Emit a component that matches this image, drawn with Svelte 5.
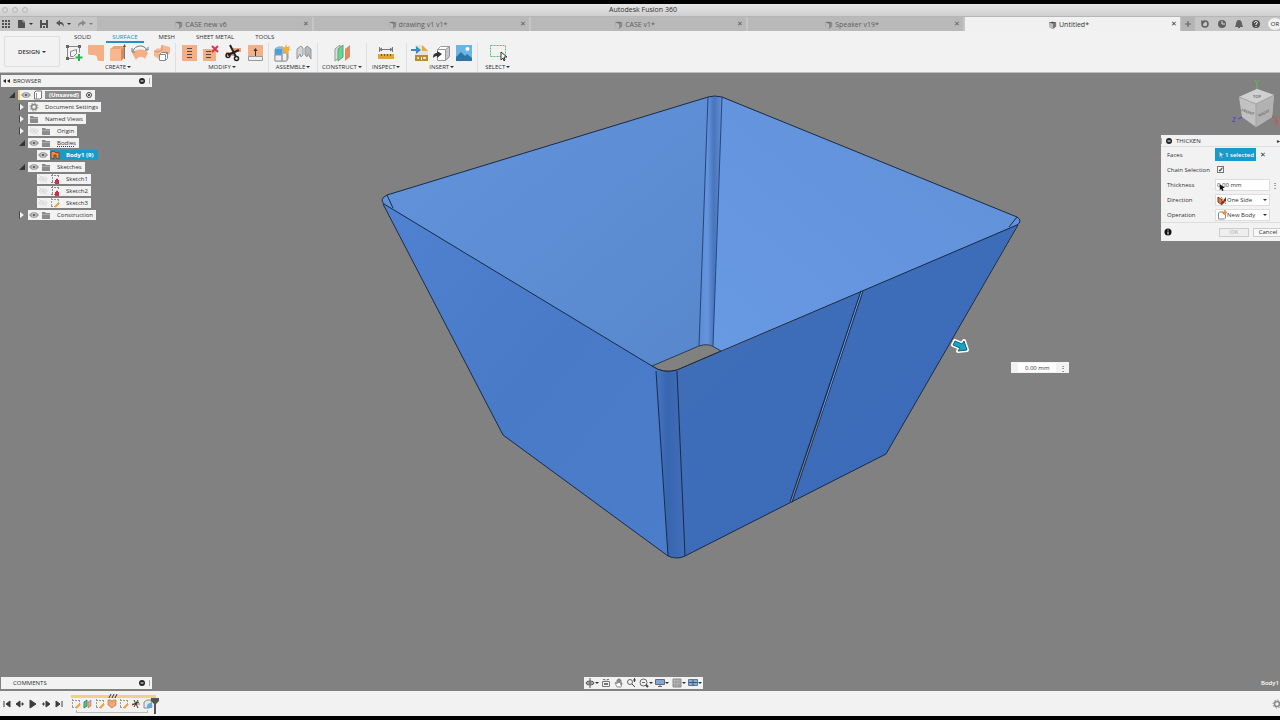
<script>
  const svg = (body, size = 18) =>
    `<svg viewBox="0 0 ${size} ${size}" width="${size}" height="${size}" fill="none" aria-hidden="true">${body}</svg>`;

  const stitches = (x) =>
    [4, 7, 10, 13].map((y) => `<path d="M${x} ${y}.500h5" stroke="#5a4638"/>`).join('');

  const tool = {
    sketch: svg('<path d="M2.500 2.500h12v6M2.500 2.500v12h7" stroke="#888"/><path d="M1 1h3v3H1zM13 1h3v3h-3zM1 13h3v3H1z" fill="#666"/><path d="M5.500 12.500v-5l6-2v4l-3 3z" stroke="#888"/><path d="M14 10v7M10.500 13.500h7" stroke="#28b34c" stroke-width="2"/>'),
    patch: svg('<path d="M1 1h16v16h-5c-1 0-2-1-2-3 0-2-1-3-4-3H3c-1 0-2-1-2-2z" fill="#f5af86"/>'),
    extrude: svg('<path d="M12 5l4-3v11l-4 4z" fill="#d98a5d"/><path d="M1 5h11v12H1z" fill="#f8b88f"/><path d="M1 5l4-3h11l-4 3z" fill="#e8a27a"/><path d="M15.500 1v14" stroke="#777"/><path d="M14 3l1.500-3L17 3z" fill="#555"/>'),
    revolve: svg('<path d="M1 9c3-4 13-5 16 0l-3 6c-3-3-6-3-9 1z" fill="#f5af82"/><path d="M2 7c2-6 11-7 14-1" stroke="#777"/><path d="M14 6h3V3M1 4v4h3" stroke="#777"/>'),
    sweep: svg('<path d="M1 7l4-3 2 1 2-4 8 2v6l-4 3H6v3l-5-3z" fill="#f8b88f"/><path d="M1 7l5 1 3-2V1" stroke="#dd9468"/><path d="M6 10l2-2h7v7l-2 2H6z" fill="#fff"/><path d="M6.500 10.500h6v6h-6zM12.500 10.500l2-2v6l-2 2M6.500 10.500l2-2h6" stroke="#888"/>'),
    stitch: svg(`<path d="M2 1h15v16H2z" fill="#f5af86"/>${stitches(7)}`),
    unstitch: svg(`<path d="M1 5h13v12H1z" fill="#f5af86"/>${[7, 10, 13].map((y) => `<path d="M4 ${y}.500h5" stroke="#5a4638"/>`).join('')}<path d="M10 2l6 6M16 2l-6 6" stroke="#e2324a" stroke-width="2"/>`),
    trim: svg('<path d="M9 4h8v4H9zM2 8h8v4H2z" fill="#e8a27a"/><path d="M6 1l6 12M15 6L4 11" stroke="#222" stroke-width="2"/><circle cx="12.500" cy="14.500" r="2" stroke="#222" stroke-width="1.500"/><circle cx="4" cy="11.500" r="2" stroke="#222" stroke-width="1.500"/>'),
    extend: svg('<path d="M2 1h15v12H2z" fill="#f5af86"/><path d="M2.500 12.500h14v4h-14z" fill="#eee" stroke="#999"/><path d="M9.500 12V6" stroke="#333"/><path d="M7.500 7l2-3 2 3z" fill="#333"/>'),
    component: svg('<path d="M2 5l3-2h5v4h5v8l-2 2H2z" fill="#bbb" stroke="#999"/><path d="M2 5h7v6H2z" fill="#4c9fdc"/><path d="M2 5l2-2h6l-1 2z" fill="#81bdea"/><path d="M9 9h5v8H9zM2 11h7v6H2z" fill="#eee" stroke="#999"/><path d="M13 0l1 3 3-1-1 3 2 1-3 1v3l-2-2-2 1v-3L9 4l3-1z" fill="#f2b134"/>'),
    joint: svg('<path d="M2 5l4-3 2 2v7l-2 2-1-3-3 5z" fill="#d3d6d8" stroke="#999"/><path d="M16 5l-4-3-2 2v7l2 2 1-3 3 5z" fill="#b4b9bc" stroke="#999"/>'),
    plane: svg('<path d="M2 5l5-4v12l-5 4z" fill="#dcdedc" stroke="#999"/><path d="M5 5l5-4v12l-5 4z" fill="#66d492" stroke="#58a678"/><path d="M12 5l5-4v12l-5 4z" fill="#df8b66"/>'),
    measure: svg('<path d="M2 5.500h14M2.500 3v5M15.500 3v5" stroke="#777"/><path d="M2 5.500l3-2v4zM16 5.500l-3-2v4z" fill="#777"/><path d="M1 10h16v5H1z" fill="#e2a433"/><path d="M4.500 10v2M7.500 10v2M10.500 10v2M13.500 10v2" stroke="#76551f"/>'),
    insertFile: svg('<path d="M4 1h8l5 5v11H4z" fill="#e8e5d8"/><path d="M11 1l6 6h-6z" fill="#e6ac37"/><path d="M4 11h13v6H4z" fill="#b78b32"/><path d="M6.500 13.500h1v1h-1zM10.500 13v3M12.500 13.500h2v1h-2z" stroke="#fff3cd"/><path d="M0 5h5V2l5 4-5 4V7H0z" fill="#2f8fce"/>'),
    insertMesh: svg('<path d="M4 5l3-3h10v11l-4 4H4z" fill="#fff"/><path d="M13 5l4-3v11l-4 4z" fill="#c8c8c8"/><path d="M4.500 5.500h8v11h-8zM4.500 5.500l3-3h9v10l-4 4M12.500 5.500l4-3" stroke="#999"/><path d="M0 14c0-4 2-5 4-5V7l5 3-5 4v-2c-2 0-3 1-4 2z" fill="#333"/>'),
    image: svg('<path d="M1 1h16v16H1z" fill="#6bb4e4"/><path d="M1 13l5-5 4 4 2-2 5 4v3H1z" fill="#2d74a8"/><circle cx="12.500" cy="5" r="2" fill="#fff"/>'),
    select: svg('<path d="M1.500 1.500h15v11h-15z" stroke="#4cc07a" stroke-dasharray="2 1"/><path d="M12 8v8l2-2 1 3 1-1-1-3h3z" fill="#fff" stroke="#333"/>')
  };

  const groups = [
    { label: 'CREATE', icons: ['sketch', 'patch', 'extrude', 'revolve', 'sweep'] },
    { label: 'MODIFY', icons: ['stitch', 'unstitch', 'trim', 'extend'] },
    { label: 'ASSEMBLE', icons: ['component', 'joint'] },
    { label: 'CONSTRUCT', icons: ['plane'] },
    { label: 'INSPECT', icons: ['measure'] },
    { label: 'INSERT', icons: ['insertFile', 'insertMesh', 'image'] },
    { label: 'SELECT', icons: ['select'] }
  ];

  const documents = ['CASE new v6', 'drawing v1 v1*', 'CASE v1*', 'Speaker v19*', 'Untitled*'];
  const workspaces = ['SOLID', 'SURFACE', 'MESH', 'SHEET METAL', 'TOOLS'];

  const s = (body) => svg(body, 10);
  const eyeShape = '<path d="M0 5c3-4 7-4 10 0-3 4-7 4-10 0z" fill="#999"/><circle cx="5" cy="5" r="2" fill="#666" stroke="#ddd"/>';
  const small = {
    cube: s('<path d="M0 2l4-1 5 1v5l-4 3-4-2z" fill="#777"/><path d="M0 2l5 1v7L1 8z" fill="#bbb"/><path d="M0 2l4-1 5 1-4 1z" fill="#555"/>'),
    eye: s(eyeShape),
    hidden: s(`<g opacity=".2">${eyeShape}<path d="M1 1l8 8" stroke="#888"/></g>`),
    folder: s('<path d="M1 2h3l1 1h4v6H1z" fill="#8c8c8c"/><path d="M1 4.500h8" stroke="#aaa"/>'),
    gear: s('<circle cx="5" cy="5" r="2.500" stroke="#888" stroke-width="1.500"/><circle cx="5" cy="5" r="4" stroke="#888" stroke-dasharray="1.500 1.600"/>'),
    part: s('<path d="M1.500 2l2-1h5v7l-2 1h-5z" fill="#fff" stroke="#777"/><path d="M3.500 3v6" stroke="#999"/>'),
    surface: s('<path d="M1 2l3-1 2 2 3-1v7l-3-1V5H4v4L1 8z" fill="#f58b3c" stroke="#8e4316"/>'),
    locked: s('<path d="M1 1.500h8M2.500 0v9M1 8.500h4M8.500 1v3" stroke="#888" stroke-dasharray="2 1"/><path d="M5 6h4v4H5z" fill="#d82b45"/><path d="M6.500 6V5h1v1" stroke="#d82b45"/>'),
    editable: s('<path d="M1 1.500h8M1.500 0v9M1 8.500h5M8.500 1v4" stroke="#999" stroke-dasharray="2 1"/><path d="M5 9l4-4" stroke="#efa23c" stroke-width="2"/>'),
    dot: s('<circle cx="5" cy="5" r="3" fill="#222"/><path d="M3.500 5h3" stroke="#fff"/>'),
    grid: s('<path d="M1 1h2v2H1zM4 1h2v2H4zM7 1h2v2H7zM1 4h2v2H1zM4 4h2v2H4zM7 4h2v2H7zM1 7h2v2H1zM4 7h2v2H4zM7 7h2v2H7z" fill="#505050"/>'),
    file: s('<path d="M1 1h5l2 2v6H1z" fill="#505050"/><path d="M6 1v2h2" stroke="#aaa"/>'),
    save: s('<path d="M1 1h8v8H1z" fill="#505050"/><path d="M3 1h4v3H3zM3 6h4v3H3z" fill="#ccc"/><path d="M4 7h2v2H4z" fill="#505050"/>'),
    undo: s('<path d="M1 4l4-3v2c3 0 4 2 4 5-1-2-2-3-4-3v2z" fill="#555"/>'),
    redo: s('<path d="M9 4L5 1v2C2 3 1 5 1 8c1-2 2-3 4-3v2z" fill="#888"/>'),
    plus: s('<path d="M5 2v6M2 5h6" stroke="#666" stroke-width="1.200"/>'),
    sync: s('<circle cx="5" cy="5" r="3" stroke="#606060" stroke-width="1.500"/><path d="M1 1l4 2-3 3z" fill="#606060"/>'),
    clock: s('<circle cx="5" cy="5" r="4" fill="#606060"/><path d="M5 2v3h3" stroke="#ddd"/>'),
    bell: s('<path d="M5 1c2 0 3 2 3 4l1 3H1l1-3c0-2 1-4 3-4zM4 8h2v1H4z" fill="#606060"/>'),
    help: s('<circle cx="5" cy="5" r="4" fill="#505050"/><path d="M3.500 4c0-2 3-2 3 0L5 5v1M5 7v1" stroke="#fff"/>'),
    info: s('<circle cx="5" cy="5" r="3.500" fill="#111"/><path d="M5 2.500v1M5 4.500v3" stroke="#fff"/>'),
    rewind: s('<path d="M5 3v4L2 5zM9 3v4L6 5z" fill="#222"/>'),
    pointer: s('<path d="M3 1v7l2-2 1 3 1-1-1-3h3z" fill="#bfe8f8" stroke="#6b7a80" stroke-width=".5"/>'),
    oneSide: s('<path d="M1 2l4 3v5L1 7z" fill="#e98043" stroke="#743b20"/><path d="M4 8l5-6v4L6 9z" fill="#5c3a2a"/><path d="M4 2l5 7" stroke="#e0683a"/>'),
    newBody: s('<path d="M1.500 3l1-1h4v2h2v4l-1 1h-6z" fill="#fff" stroke="#888"/><path d="M8 0v5M5 2.500h5" stroke="#f08a34" stroke-width="1.500"/>'),
    orbit: s('<path d="M5 0v10M1 5h8" stroke="#555"/><ellipse cx="5" cy="5" rx="4" ry="2" stroke="#555"/>'),
    look: s('<path d="M1.500 3.500h7v5h-7zM2 1.500h2v1M6 2.500v-1h2" stroke="#777"/><path d="M3 6h4" stroke="#777" stroke-width="2"/>'),
    hand: s('<path d="M3 9L1 5l1-1 1 2V2h1v3-4h1v4-4h1v4-3h1v5-2h1L7 9z" fill="#fff" stroke="#777" stroke-width=".8"/>'),
    zoom: s('<circle cx="4" cy="4" r="2.500" stroke="#666"/><path d="M6 6l3 3M7 2h3M8.500 0v4" stroke="#444"/>'),
    fit: s('<circle cx="4.500" cy="4.500" r="3.500" stroke="#666"/><path d="M7 7l2 2" stroke="#444" stroke-width="2"/><path d="M3 4.500h3" stroke="#666"/>'),
    display: s('<path d="M.5 1.500h9v5h-9z" fill="#7fa9d2" stroke="#667"/><path d="M3 8.500h4M5 7v2" stroke="#667"/>'),
    layout: s('<path d="M1 1h8v8H1z" fill="#bbb" stroke="#888"/><path d="M4 1v8M7 1v8M1 4h8M1 7h8" stroke="#888" stroke-width=".6"/>'),
    views: s('<path d="M.5 1.500h9v6h-9z" fill="#83aedb" stroke="#678"/><path d="M5 2v6M1 4.500h8" stroke="#456"/>'),
    planeSmall: s('<path d="M1 3l3-2v6L1 9z" fill="#5ec183" stroke="#3c8e5d"/><path d="M5 3l3-2v6L5 9z" fill="#f4a46e" stroke="#777" stroke-width=".5"/>'),
    loft: s('<path d="M1 1h3l1 2 1-2h3v5L5 9 1 6z" fill="#f0a678" stroke="#b9784f" stroke-width=".7"/>'),
    cut: s('<path d="M1 4h8v2H1z" fill="#f0a678"/><path d="M3 1l4 8M7 1L3 8M1 6l7-3" stroke="#333"/>'),
    body: s('<path d="M1 3l3-2h4l1 7-3 1H1z" fill="#d9e8f5" stroke="#777" stroke-width=".8"/><path d="M4 9c0-4 1-5 5-5v5z" fill="#68a8df"/>')
  };

  const tree = [
    { level: 1, toggle: 'closed', icons: ['gear'], text: 'Document Settings' },
    { level: 1, toggle: 'closed', icons: ['folder'], text: 'Named Views' },
    { level: 1, toggle: 'closed', icons: ['hidden', 'folder'], text: 'Origin' },
    { level: 1, toggle: 'open', icons: ['eye', 'folder'], text: 'Bodies', marked: true },
    { level: 2, icons: ['eye', 'surface'], text: 'Body1 (9)', selected: true },
    { level: 1, toggle: 'open', icons: ['eye', 'folder'], text: 'Sketches' },
    { level: 2, icons: ['hidden', 'locked'], text: 'Sketch1' },
    { level: 2, icons: ['hidden', 'locked'], text: 'Sketch2' },
    { level: 2, icons: ['hidden', 'editable'], text: 'Sketch3' },
    { level: 1, toggle: 'closed', icons: ['eye', 'folder'], text: 'Construction' }
  ];

  const nav = [
    { icon: 'orbit', name: 'Orbit', menu: true },
    { icon: 'look', name: 'Look at' },
    { icon: 'hand', name: 'Pan' },
    { icon: 'zoom', name: 'Zoom' },
    { icon: 'fit', name: 'Fit', menu: true },
    { icon: 'display', name: 'Display settings', menu: true },
    { icon: 'layout', name: 'Grid and snaps', menu: true },
    { icon: 'views', name: 'Viewports', menu: true }
  ];

  const playback = [
    { name: 'Go to start', d: 'M2 2v6M8 2L4 5l4 3z' },
    { name: 'Step back', d: 'M5 2L1 5l4 3zM7 4h1v2H7z' },
    { name: 'Play', d: 'M2 1l6 4-6 4z' },
    { name: 'Step forward', d: 'M5 2l4 3-4 3zM2 4h1v2H2z' },
    { name: 'Go to end', d: 'M8 2v6M2 2l4 3-4 3z' }
  ];
  const features = ['editable', 'planeSmall', 'editable', 'loft', 'editable', 'cut', 'body'];

  let chain = $state(true);
  let thickness = $state('0.00 mm');
</script>

<div class="app">
  <header class="title"><span class="lights"><i></i><i></i><i></i></span><span>Autodesk Fusion 360</span></header>

  <div class="tabbar">
    <div class="quick">
      <button aria-label="Data panel">{@html small.grid}</button>
      <button class="menu" aria-label="File">{@html small.file}<b class="caret"></b></button>
      <button aria-label="Save">{@html small.save}</button>
      <button class="menu" aria-label="Undo">{@html small.undo}<b class="caret"></b></button>
      <button class="menu" aria-label="Redo">{@html small.redo}<b class="caret pale"></b></button>
    </div>
    <nav class="docs">
      {#each documents as doc, i}
        <div class="doc" class:current={i === 4}>
          <button class="name">{@html small.cube}{doc}</button>
          <button class="close" aria-label="Close {doc}">✕</button>
        </div>
      {/each}
    </nav>
    <div class="account">
      <button class="add" aria-label="New design">{@html small.plus}</button>
      <button aria-label="Extensions">{@html small.sync}</button>
      <button aria-label="Job status">{@html small.clock}</button>
      <button aria-label="Notifications">{@html small.bell}</button>
      <button aria-label="Help">{@html small.help}</button>
      <button class="avatar">OR</button>
    </div>
  </div>

  <div class="toolbar">
    <button class="design">DESIGN <b class="caret"></b></button>
    <div class="ribbon">
      <nav class="spaces">
        {#each workspaces as w}<button class:active={w === 'SURFACE'}>{w}</button>{/each}
      </nav>
      <div class="groups">
        {#each groups as g}
          <div class="group">
            <div class="icons">
              {#each g.icons as name}<button aria-label={name}>{@html tool[name]}</button>{/each}
            </div>
            <button class="label">{g.label} <b class="caret"></b></button>
          </div>
        {/each}
      </div>
    </div>
  </div>

  <main>
    <svg class="model" viewBox="0 73 1280 618" role="img" aria-label="Tapered open box">
      <defs>
        <linearGradient id="innerL" x1="0" y1="0" x2="1" y2="1"><stop stop-color="#6394dc" /><stop offset="1" stop-color="#5887cc" /></linearGradient>
        <linearGradient id="innerR" x1="0" y1="1" x2="1" y2="0"><stop stop-color="#6899e3" /><stop offset="1" stop-color="#6090d7" /></linearGradient>
        <linearGradient id="outerL" x1="0" y1="0" x2="1" y2="1"><stop stop-color="#5082d1" /><stop offset=".5" stop-color="#487ac8" /><stop offset="1" stop-color="#4b7dca" /></linearGradient>
        <linearGradient id="outerR" x1="0" y1="0" x2="1" y2="1"><stop stop-color="#416fb7" /><stop offset="1" stop-color="#3969bb" /></linearGradient>
        <linearGradient id="post"><stop stop-color="#4777c3" /><stop offset=".4" stop-color="#3865b0" /><stop offset="1" stop-color="#416fb8" /></linearGradient>
        <linearGradient id="back"><stop stop-color="#5b8bd2" /><stop offset=".35" stop-color="#6695df" /><stop offset=".65" stop-color="#4875bb" /><stop offset="1" stop-color="#6390d5" /></linearGradient>
      </defs>
      <path d="M387 195L708 97V346L652 367L384 204Q379 199 387 195z" fill="url(#innerL)" />
      <path d="M721 97L1017 217Q1023 221 1017 225L721 351L709 345z" fill="url(#innerR)" />
      <path d="M708 97Q714 95 722 97L713 346Q706 343 699 346z" fill="url(#back)" />
      <path d="M708 97L699 346M722 97L713 346" stroke="#24467e" fill="none" />
      <path d="M652 366L699 346Q708 343 714 347L721 351L677 370Q663 374 652 366z" fill="#818180" stroke="#293b55" />
      <path d="M383 203L652 366L657 370L668 556L503 435z" fill="url(#outerL)" />
      <path d="M677 371L1018 224L886 454L683 557z" fill="url(#outerR)" />
      <path d="M656 369Q665 374 677 370L685 556Q677 560 668 556z" fill="url(#post)" />
      <path d="M862 291L791 502" stroke="#172e50" stroke-width="3" />
      <path d="M862 291L822 411" stroke="#79a0d8" stroke-width="1" />
      <path d="M822 411L791 502" stroke="#858b8d" stroke-width="1" />
      <path d="M387 195L708 97Q714 95 722 97L1017 217Q1023 221 1017 225L677 370Q663 374 652 366L384 204Q379 199 387 195zM383 204L503 435L668 556Q677 560 685 556L886 454L1018 225M656 371L668 556M677 371L685 556M387 195L393 208M1017 217L1009 227" fill="none" stroke="#182b48" stroke-width="1" />
      <path class="halo" d="M955 341l7 3 2-3 3 9-9 1 2-3-7-3z" />
      <path class="arrow" d="M955 341l7 3 2-3 3 9-9 1 2-3-7-3z" />
    </svg>

    <aside class="browser">
      <header class="bar"><button class="collapse" aria-label="Collapse browser">{@html small.rewind}</button><h2>BROWSER</h2><button class="options" aria-label="Browser options">{@html small.dot}</button><span class="grip"></span></header>
      <ul>
        <li class="root">
          <i class="toggle open"></i>
          <button class="row rootrow">{@html small.eye}{@html small.part}<span class="tag">(Unsaved)</span><span class="radio"></span></button>
        </li>
        {#each tree as n}
          <li class:deep={n.level === 2}>
            {#if n.toggle}<i class="toggle {n.toggle}"></i>{/if}
            <button class="row" class:selected={n.selected} class:marked={n.marked}>
              {#each n.icons as name}{@html small[name]}{/each}
              <span>{n.text}</span>
            </button>
          </li>
        {/each}
      </ul>
    </aside>

    <aside class="right">
      <svg class="viewcube" viewBox="0 0 50 58" width="50" height="58" role="img" aria-label="View cube">
        <path d="M27 28V8" stroke="#58c758" /><path d="M8 42l7-3" stroke="#4b49c4" /><path d="M42 39l5 4" stroke="#d44" />
        <path d="M9 20L27 12L44 18L42 40L26 50L12 40z" fill="#c2c2c2" />
        <path d="M9 20L27 12L44 18L26 27z" fill="#d0d0d0" /><path d="M26 27L44 18L42 40L26 50z" fill="#b2b2b2" />
        <path d="M9 20L26 27L44 18M26 27V50" stroke="#a2a2a2" fill="none" />
        <text x="25" y="8" fill="#52cb52">Y</text><text x="2" y="45" fill="#4340c8">Z</text><text x="45" y="48" fill="#e0403c">X</text>
        <g class="face"><text x="23" y="21">TOP</text><text x="11" y="34" transform="rotate(20 11 34)">FRONT</text><text x="29" y="40" transform="rotate(-25 29 40)">RIGHT</text></g>
      </svg>
      <form class="thicken" onsubmit={(e) => e.preventDefault()}>
        <header><span class="grip"></span>{@html small.dot}<h2>THICKEN</h2><span class="more">▸</span></header>
        <div class="field"><span>Faces</span><button type="button" class="picked">{@html small.pointer}1 selected</button><button type="button" class="clear" aria-label="Clear faces">✕</button></div>
        <div class="field"><label for="chain">Chain Selection</label><input id="chain" type="checkbox" bind:checked={chain} /></div>
        <div class="field"><label for="thick">Thickness</label><div class="control"><input id="thick" bind:value={thickness} />
          <svg class="mouse" width="6" height="9" viewBox="0 0 8 11"><path d="M1 1v8l2-2 1 3 2-1-1-3h3z" fill="#111" /></svg></div><span class="dots">⋮</span></div>
        <div class="field"><label for="direction">Direction</label><div class="control">{@html small.oneSide}<select id="direction"><option>One Side</option><option>Two Side</option></select><b class="caret"></b></div></div>
        <div class="field"><label for="operation">Operation</label><div class="control">{@html small.newBody}<select id="operation"><option>New Body</option><option>Join</option></select><b class="caret"></b></div></div>
        <footer>{@html small.info}<span class="push"></span><button disabled>OK</button><button type="button">Cancel</button></footer>
      </form>
    </aside>

    <div class="float"><input aria-label="Thickness value" bind:value={thickness} /><span>⋮</span></div>

    <div class="bottom">
      <div class="bar comments"><h2>COMMENTS</h2><button class="options" aria-label="Comment options">{@html small.dot}</button><span class="grip"></span></div>
      <div class="nav">
        {#each nav as n}<button aria-label={n.name}>{@html small[n.icon]}{#if n.menu}<b class="caret"></b>{/if}</button>{/each}
      </div>
      <span class="status">Body1</span>
    </div>
  </main>

  <footer class="timeline">
    <div class="playback">
      {#each playback as p}
        <button aria-label={p.name}><svg width="10" height="10" viewBox="0 0 10 10"><path d={p.d} fill="#3c3c3c" stroke="#3c3c3c" stroke-width="1" /></svg></button>
      {/each}
    </div>
    <div class="history">
      {#each features as f, i}<button aria-label="Feature {i + 1}">{@html small[f]}</button>{/each}
      <svg class="marker" width="8" height="17" viewBox="0 0 8 17"><path d="M0 1h8v3L5 7v10H3V7L0 4z" fill="#555" /></svg>
      <svg class="ticks" width="10" height="4" viewBox="0 0 10 4"><path d="M1 4l2-4M4 4l2-4M7 4l2-4" stroke="#333" stroke-width="1" /></svg>
      <span class="track"></span>
    </div>
    <button class="prefs" aria-label="Timeline settings">{@html small.gear}</button>
  </footer>
</div>

<style>
  :global(body) { margin: 0; background: #000; }
  .app {
    box-sizing: border-box; min-height: 100vh; padding: 4px 0; overflow: hidden;
    display: flex; flex-direction: column; background: #000; color: #303030;
    font: 500 6px/10px "Open Sans", "Noto Sans", sans-serif;
  }
  button, input, select { font: inherit; color: inherit; border: 0; padding: 0; margin: 0; background: none; border-radius: 0; }
  button { display: flex; align-items: center; justify-content: center; white-space: nowrap; }
  h2 { font: inherit; margin: 0; }
  .app :global(svg) { display: block; flex: none; }
  .caret { border: 2px solid transparent; border-top: 2px solid currentColor; border-bottom: 0; width: 0; flex: none; }
  .pale { opacity: .5; }

  .title { height: 12px; display: grid; grid-template-columns: 1fr auto 1fr; align-items: center; background: linear-gradient(#e6e6e6, #cecece); font-size: 7px; padding-left: 6px; }
  .lights { display: flex; gap: 4px; margin-left: -4px; }
  .lights i { box-sizing: border-box; width: 6px; height: 6px; border: 1px solid #b5b5b5; border-radius: 50%; background: #dadada; }

  .tabbar { display: flex; height: 15px; background: #c6c6c6; border-top: 1px solid #b6b6b6; box-sizing: border-box; }
  .quick { width: 97px; display: flex; align-items: center; gap: 6px; padding-left: 1px; box-sizing: border-box; }
  .quick .menu { gap: 2px; }
  .docs { flex: 1; display: flex; gap: 2px; }
  .doc { flex: 1; display: flex; background: #b9b9b9; color: #5c5c5c; font-size: 7px; }
  .doc .name { flex: 1; gap: 2px; padding: 1px 0 0 5px; }
  .doc :global(svg) { opacity: .7; width: 8px; height: 8px; }
  .doc.current :global(svg) { opacity: 1; }
  .close { width: 12px; }
  .doc.current { background: #f1f1f1; color: #333; }
  .account { width: 100px; display: flex; align-items: center; gap: 7px; overflow: hidden; }
  .account button { flex: none; }
  .account .add { width: 14px; height: 14px; margin: 0 -2px 0 1px; background: #b5b5b5; }
  .account .avatar { width: 14px; height: 12px; border-radius: 50%; background: #f1f1f1; }

  .toolbar { display: flex; height: 42px; box-sizing: border-box; background: #f2f2f2; border-bottom: 1px solid #bdbdbd; }
  .design { width: 56px; height: 31px; margin: 5px 0 0 4px; gap: 2px; border: 1px solid #dedede; border-radius: 2px; font-weight: 600; box-sizing: border-box; }
  .spaces { display: flex; gap: 9px; margin-left: 8px; height: 12px; }
  .spaces button { padding: 1px 6px 0; border-bottom: 2px solid transparent; }
  .spaces .active { color: #158ac6; border-color: #258fc7; }
  .groups { display: flex; height: 29px; margin-left: 1px; }
  .group { display: flex; flex-direction: column; align-items: center; min-width: 40px; box-sizing: border-box; padding: 1px 4px 0; border-right: 1px solid #dfdfdf; }
  .group:last-child { border: 0; }
  .icons { display: flex; gap: 4px; }
  .label { gap: 1px; height: 9px; }

  main { flex: 1; position: relative; display: grid; grid-template: 1fr auto / auto 1fr auto; background: #818181; overflow: hidden; }
  .model { position: absolute; inset: 0; width: 100%; height: 100%; }
  .halo { fill: #fff; stroke: #fff; stroke-width: 4px; stroke-linejoin: round; }
  .arrow { fill: #14a5c4; stroke: #155e72; stroke-width: 1px; }
  .bar { display: flex; align-items: center; box-sizing: border-box; width: 151px; height: 12px; background: #f2f2f2; gap: 2px; padding: 0 2px 0 0; }
  .bar h2 { flex: 1; }
  .grip { width: 1px; height: 6px; background: #aaa; }
  .browser { position: relative; padding: 2px 0 0 1px; }
  .browser ul { list-style: none; margin: 3px 0 0; padding: 0; display: grid; gap: 2px; }
  .browser li { display: flex; align-items: center; padding-left: 18px; gap: 3px; height: 10px; }
  .browser li.root { padding-left: 8px; gap: 3px; }
  .browser li.deep { padding-left: 36px; }
  .row { height: 10px; background: #f2f2f2; padding: 0 3px 0 1px; gap: 2px; }
  .row span { padding-left: 4px; }
  .rootrow { border-left: 2px solid #f5d67e; }
  .rootrow .tag { background: #8e8e8e; color: #fff; font-weight: 700; padding: 0 2px 0 4px; line-height: 8px; }
  .rootrow .radio { width: 2px; height: 2px; padding: 0; margin: 0 2px 0 5px; border-radius: 50%; background: #222; outline: 1px solid #444; outline-offset: 1px; }
  .marked { text-decoration: underline dotted #243b91; }
  .selected { background: linear-gradient(90deg, #f2f2f2 13px, #169bcb 13px); color: #fff; font-weight: 700; padding-right: 5px; }
  .toggle { width: 6px; height: 6px; flex: none; background: #333; clip-path: polygon(100% 0, 100% 100%, 0 100%); }
  .toggle.closed { height: 8px; background: linear-gradient(90deg, #444 1px, #f2f2f2 1px); clip-path: polygon(0 0, 80% 50%, 0 100%); }

  .right { grid-column: 3; position: relative; display: flex; flex-direction: column; align-items: flex-end; width: 119px; }
  .viewcube { font-size: 7px; margin-top: 4px; }
  .face { font-size: 4px; font-weight: 700; fill: #777; }
  .thicken { width: 119px; box-sizing: border-box; background: #f2f2f2; overflow: hidden; }
  .thicken header { display: flex; align-items: center; height: 12px; gap: 2px; border-bottom: 1px solid #ddd; box-sizing: border-box; }
  .more { margin-left: auto; }
  .field { display: grid; grid-template-columns: 48px 55px 1fr; height: 15px; align-items: center; padding-left: 6px; }
  .picked { width: 41px; height: 13px; background: #169bcb; color: #fff; font-weight: 600; grid-column: 2; grid-row: 1; }
  .picked :global(svg) { width: 8px; height: 8px; }
  .field .clear { grid-column: 2; grid-row: 1; justify-self: end; width: 14px; font-size: 7px; }
  .field input[type='checkbox'] { appearance: none; width: 7px; height: 7px; border: 1px solid #777; margin-left: 2px; display: grid; place-items: center; background: #fff; }
  .field input[type='checkbox']:checked::after { content: '✓'; font-size: 7px; font-weight: 700; line-height: 5px; }
  .control { position: relative; display: flex; align-items: center; height: 12px; border: 1px solid #ddd; box-sizing: border-box; background: #fff; padding: 0 2px 0 1px; }
  .control input { width: 100%; }
  .control select { flex: 1; min-width: 0; appearance: none; }
  .mouse { position: absolute; left: 3px; top: 3px; }
  .dots { font-size: 8px; text-align: center; }
  .thicken footer { display: flex; align-items: center; height: 18px; padding-left: 2px; border-top: 1px solid #ddd; gap: 4px; margin-right: -3px; }
  .thicken footer button { height: 9px; width: 30px; border: 1px solid #ccc; box-sizing: border-box; background: #f8f8f8; }
  .thicken footer button:disabled { color: #aaa; background: #eee; }
  .push { flex: 1; }

  .float { position: absolute; left: 79%; top: 289px; display: flex; width: 58px; height: 11px; background: #f2f2f2; align-items: center; }
  .float input { width: 38px; height: 9px; margin-left: 7px; background: #fff; text-align: center; }
  .float span { flex: 1; text-align: center; font-size: 8px; }

  .bottom { position: relative; grid-column: 1 / -1; grid-row: 2; display: grid; grid-template-columns: 1fr auto 1fr; align-items: center; padding: 0 1px 2px; }
  .comments { padding-left: 12px; }
  .nav { display: flex; justify-content: space-between; width: 119px; height: 12px; box-sizing: border-box; background: #f2f2f2; padding: 0 1px; margin-left: 7px; }
  .status { justify-self: end; color: #fff; font-weight: 600; }

  .timeline { display: flex; align-items: center; height: 25px; background: #f2f2f2; }
  .playback { display: flex; gap: 3px; padding-left: 2px; width: 71px; box-sizing: border-box; }
  .history { position: relative; display: flex; gap: 2px; height: 18px; border-top: 3px solid #ecd486; padding-right: 3px; align-items: flex-start; box-sizing: border-box; }
  .history button { padding-top: 1px; }
  .marker { position: absolute; right: -3px; top: -1px; }
  .ticks { position: absolute; left: 37px; top: -4px; }
  .track { position: absolute; left: 5px; right: 8px; bottom: 0; height: 2px; border: 1px solid #bbb; border-top: 0; }
  .prefs { margin-left: auto; margin-right: -2px; }
</style>
